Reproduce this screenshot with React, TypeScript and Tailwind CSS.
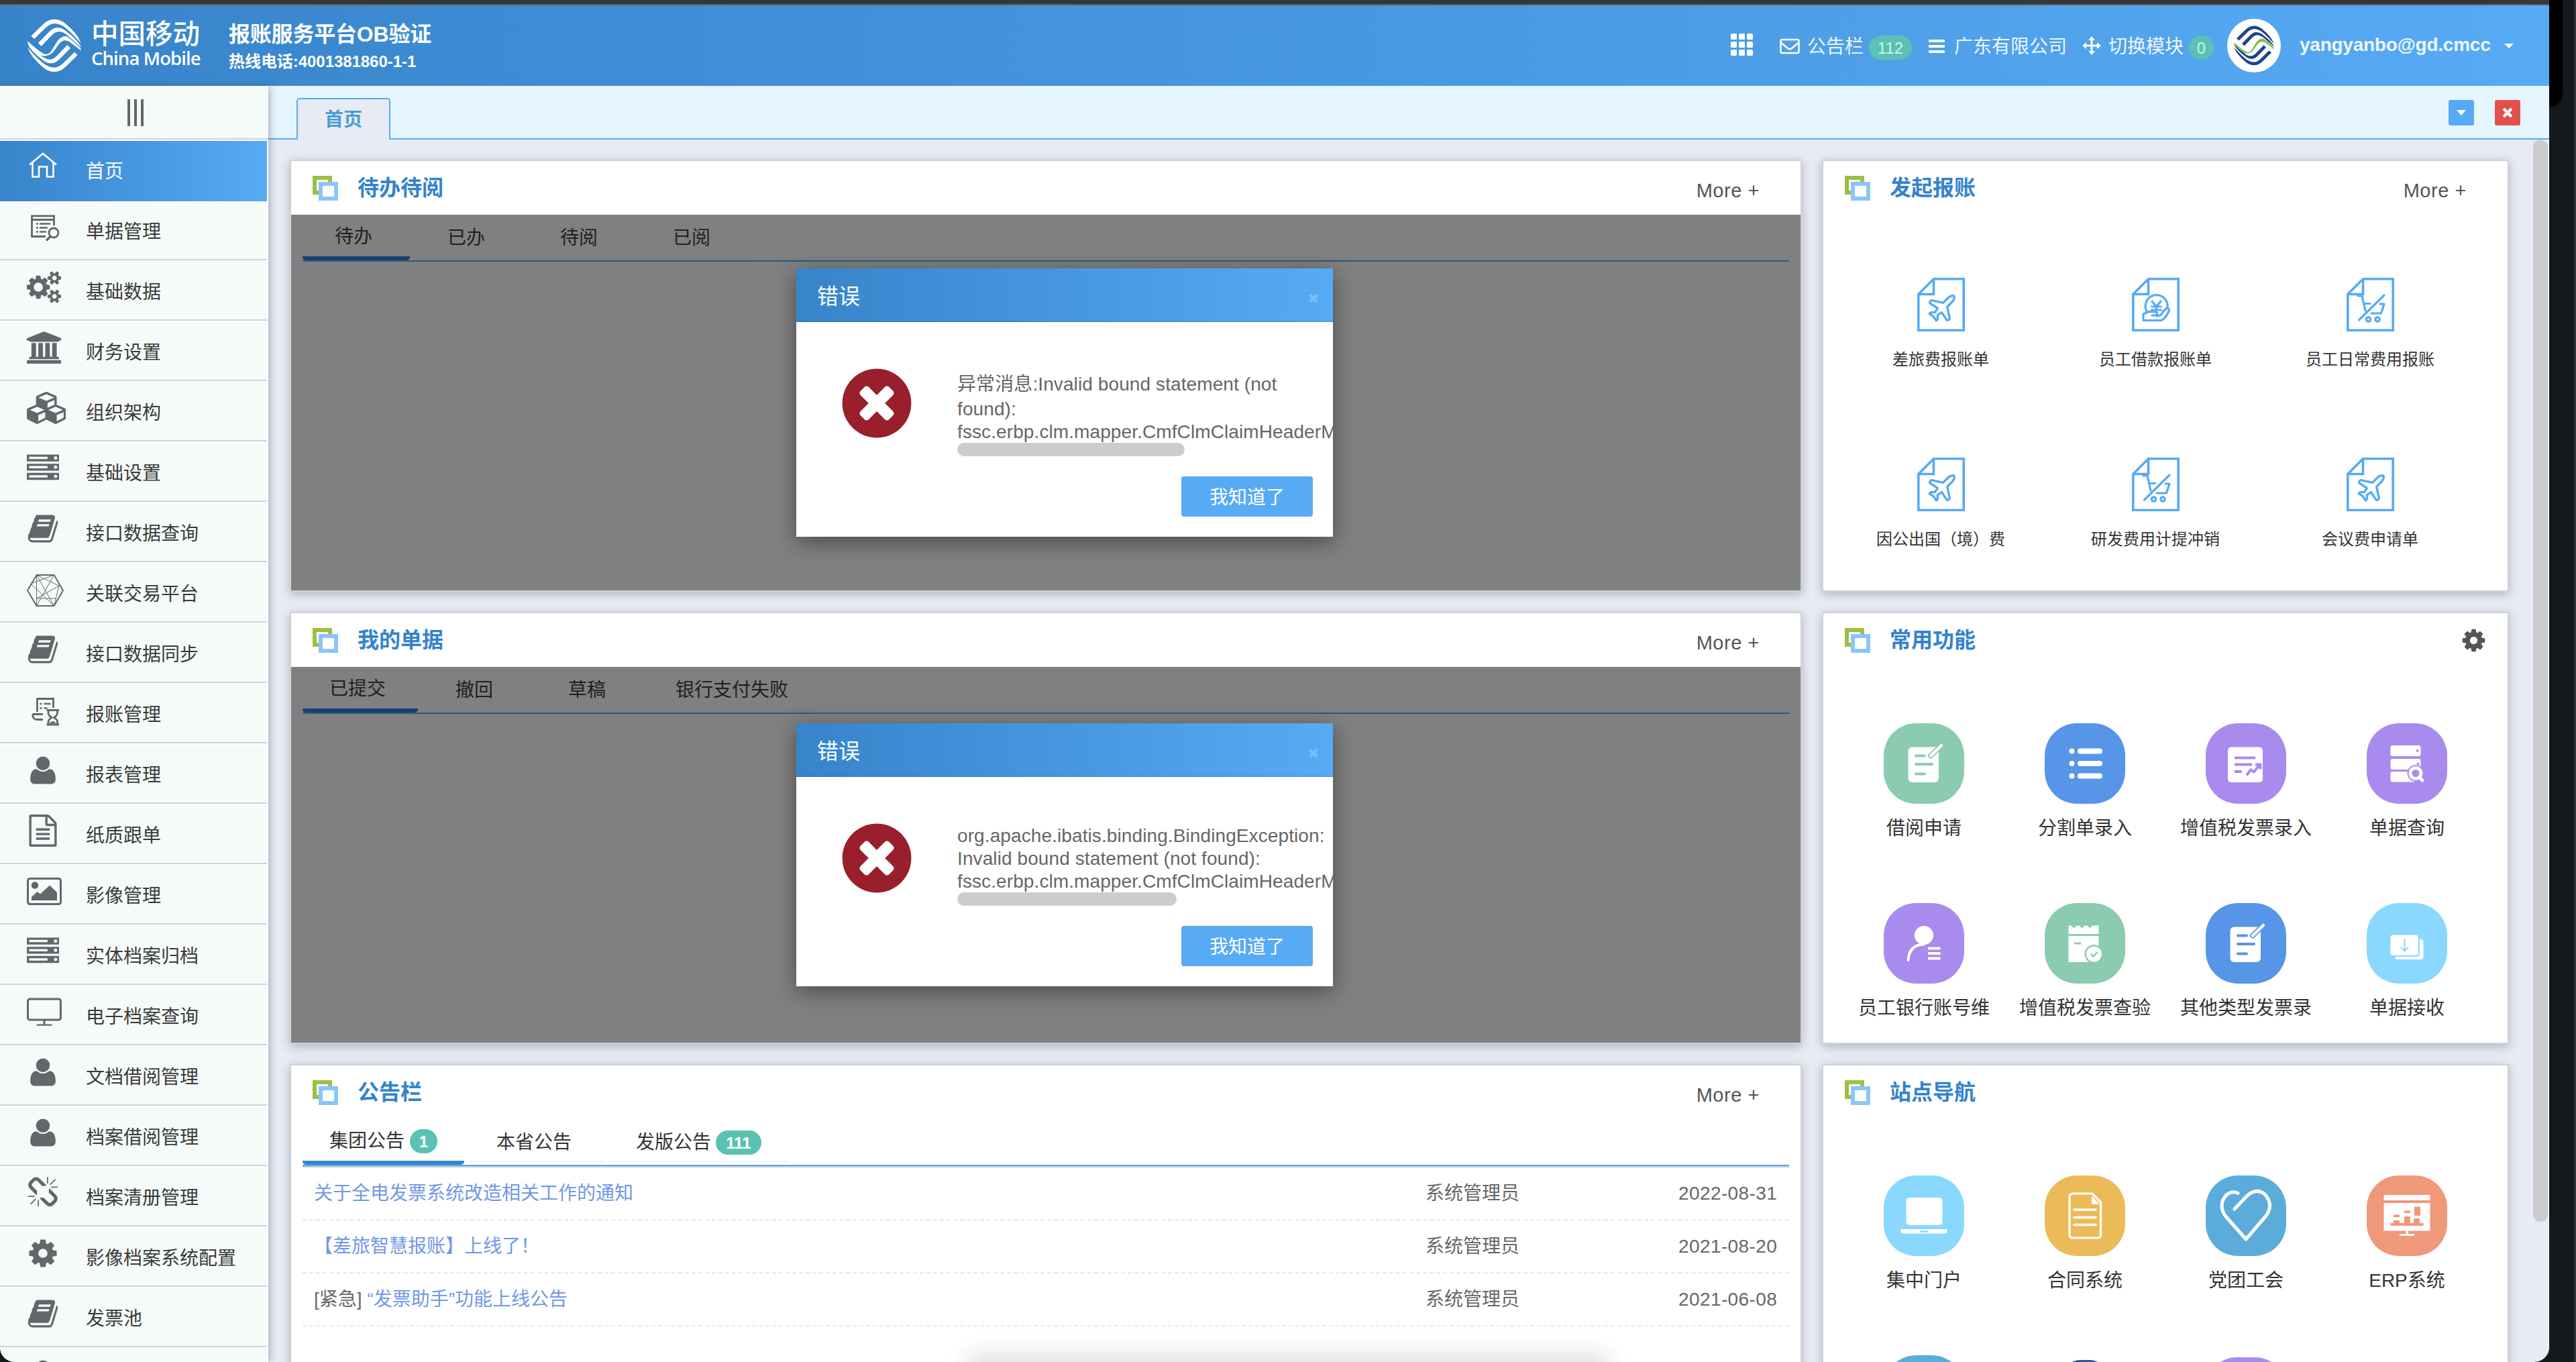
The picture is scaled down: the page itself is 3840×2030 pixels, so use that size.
import React from "react";
import { Plane } from "lucide-react";

const FA: Record<string, { d: string; w: number }> = {
  cogs: {
    w: 1920,
    d: "M896 896q0-106-75-181t-181-75-181 75-75 181 75 181 181 75 181-75 75-181zm768 512q0-52-38-90t-90-38-90 38-38 90q0 53 37.5 90.5t90.5 37.5 90.5-37.5 37.5-90.5zm0-1024q0-52-38-90t-90-38-90 38-38 90q0 53 37.5 90.5t90.5 37.5 90.5-37.5 37.5-90.5zm-384 421v185q0 10-7 19.5t-16 10.5l-155 24q-11 35-32 76 34 48 90 115 7 11 7 20 0 12-7 19-23 30-82.5 89.5t-78.5 59.5q-11 0-21-7l-115-90q-37 19-77 31-11 108-23 155-7 24-30 24h-186q-11 0-20-7.5t-10-17.5l-23-153q-34-10-75-31l-118 89q-7 7-20 7-11 0-21-8-144-133-144-160 0-9 7-19 10-14 41-53t47-61q-23-44-35-82l-152-24q-10-1-17-9.5t-7-19.5v-185q0-10 7-19.5t16-10.5l155-24q11-35 32-76-34-48-90-115-7-11-7-20 0-12 7-20 22-30 82-89t79-59q11 0 21 7l115 90q34-18 77-32 11-108 23-154 7-24 30-24h186q11 0 20 7.5t10 17.5l23 153q34 10 75 31l118-89q8-7 20-7 11 0 21 8 144 133 144 160 0 8-7 19-12 16-42 54t-45 60q23 48 34 82l152 23q10 2 17 10.5t7 19.5zm640 533v140q0 16-149 31-12 27-30 52 51 113 51 138 0 4-4 7-122 71-124 71-8 0-46-47t-52-68q-20 2-30 2t-30-2q-14 21-52 68t-46 47q-2 0-124-71-4-3-4-7 0-25 51-138-18-25-30-52-149-15-149-31v-140q0-16 149-31 13-29 30-52-51-113-51-138 0-4 4-7 4-2 35-20t59-34 30-16q8 0 46 46.5t52 67.5q20-2 30-2t30 2q51-71 92-112l6-2q4 0 124 70 4 3 4 7 0 25-51 138 17 23 30 52 149 15 149 31zm0-1024v140q0 16-149 31-12 27-30 52 51 113 51 138 0 4-4 7-122 71-124 71-8 0-46-47t-52-68q-20 2-30 2t-30-2q-14 21-52 68t-46 47q-2 0-124-71-4-3-4-7 0-25 51-138-18-25-30-52-149-15-149-31v-140q0-16 149-31 13-29 30-52-51-113-51-138 0-4 4-7 4-2 35-20t59-34 30-16q8 0 46 46.5t52 67.5q20-2 30-2t30 2q51-71 92-112l6-2q4 0 124 70 4 3 4 7 0 25-51 138 17 23 30 52 149 15 149 31z",
  },
  bank: {
    w: 1920,
    d: "M960 0l960 384v128h-128q0 26-20.5 45t-48.5 19h-1526q-28 0-48.5-19t-20.5-45h-128v-128zm-704 640h256v768h128v-768h256v768h128v-768h256v768h128v-768h256v768h59q28 0 48.5 19t20.5 45v64h-1664v-64q0-26 20.5-45t48.5-19h59v-768zm1595 960q28 0 48.5 19t20.5 45v128h-1920v-128q0-26 20.5-45t48.5-19h1782z",
  },
  cubes: {
    w: 2176,
    d: "M640 1632l384-192v-314l-384 164v342zm-64-454l404-173-404-173-404 173zm1088 454l384-192v-314l-384 164v342zm-64-454l404-173-404-173-404 173zm-448-293l384-165v-266l-384 164v267zm-64-379l441-189-441-189-441 189zm1088 518v416q0 36-19 67t-52 47l-448 224q-25 14-57 14t-57-14l-448-224q-4-2-7-4-2 2-7 4l-448 224q-25 14-57 14t-57-14l-448-224q-33-16-52-47t-19-67v-416q0-38 21.5-70t56.5-48l434-186v-400q0-38 21.5-70t56.5-48l448-192q23-10 50-10t50 10l448 192q35 16 56.5 48t21.5 70v400l434 186q36 16 57 48t21 70z",
  },
  server: {
    w: 1792,
    d: "M128 1408h1024v-128h-1024v128zm0-512h1024v-128h-1024v128zm1568 448q0-40-28-68t-68-28-68 28-28 68 28 68 68 28 68-28 28-68zm-1568-960h1024v-128h-1024v128zm1568 448q0-40-28-68t-68-28-68 28-28 68 28 68 68 28 68-28 28-68zm0-512q0-40-28-68t-68-28-68 28-28 68 28 68 68 28 68-28 28-68zm96 832v384h-1792v-384h1792zm0-512v384h-1792v-384h1792zm0-512v384h-1792v-384h1792z",
  },
  book: {
    w: 1792,
    d: "M1703 478q40 57 18 129l-275 906q-19 64-76.5 107.5t-122.5 43.5h-923q-77 0-148.5-53.5t-99.5-131.5q-24-67-2-127 0-4 3-27t4-37q1-8-3-21.5t-3-19.5q2-11 8-21t16.5-23.5 16.5-23.5q23-38 45-91.5t30-91.5q3-10 .5-30t-.5-28q3-11 17-28t17-23q21-36 42-92t25-90q1-9-2.5-32t.5-28q4-13 22-30.5t22-22.5q19-26 42.5-84.5t27.5-96.5q1-8-3-25.5t-2-26.5q2-8 9-18t18-23 17-21q8-12 16.5-30.5t15-35 16-36 19.5-32 26.5-23.5 36-11.5 47.5 5.5l-1 3q38-9 51-9h761q74 0 114 56t18 130l-274 906q-36 119-71.5 153.5t-128.5 34.5h-869q-27 0-38 15-11 16-1 43 24 70 144 70h923q29 0 56-15.5t35-41.5l300-987q7-22 5-57 38 15 59 43zm-1064 2q-4 13 2 22.5t20 9.5h608q13 0 25.5-9.5t16.5-22.5l21-64q4-13-2-22.5t-20-9.5h-608q-13 0-25.5 9.5t-16.5 22.5zm-83 256q-4 13 2 22.5t20 9.5h608q13 0 25.5-9.5t16.5-22.5l21-64q4-13-2-22.5t-20-9.5h-608q-13 0-25.5 9.5t-16.5 22.5z",
  },
  user: {
    w: 1792,
    d: "M1600 1405q0 120-73 189.5t-194 69.5h-874q-121 0-194-69.5t-73-189.5q0-53 3.5-103.5t14-109 26.5-108.5 43-97.5 62-81 85.5-53.5 111.5-20q9 0 42 21.5t74.5 48 108 48 133.5 21.5 133.5-21.5 108-48 74.5-48 42-21.5q61 0 111.5 20t85.5 53.5 62 81 43 97.5 26.5 108.5 14 109 3.5 103.5zm-320-893q0 159-112.5 271.5t-271.5 112.5-271.5-112.5-112.5-271.5 112.5-271.5 271.5-112.5 271.5 112.5 112.5 271.5z",
  },
  file: {
    w: 1792,
    d: "M1596 380q28 28 48 76t20 88v1152q0 40-28 68t-68 28h-1344q-40 0-68-28t-28-68v-1600q0-40 28-68t68-28h896q40 0 88 20t76 48zm-444-244v376h376q-10-29-22-41l-313-313q-12-12-41-22zm384 1528v-1024h-416q-40 0-68-28t-28-68v-416h-768v1536h1280zm-1024-864q0-14 9-23t23-9h704q14 0 23 9t9 23v64q0 14-9 23t-23 9h-704q-14 0-23-9t-9-23v-64zm736 224q14 0 23 9t9 23v64q0 14-9 23t-23 9h-704q-14 0-23-9t-9-23v-64q0-14 9-23t23-9h704zm0 256q14 0 23 9t9 23v64q0 14-9 23t-23 9h-704q-14 0-23-9t-9-23v-64q0-14 9-23t23-9h704z",
  },
  unlink: {
    w: 1792,
    d: "M503 1271l-256 256q-10 9-23 9-12 0-23-9-9-10-9-23t9-23l256-256q10-9 23-9t23 9q9 10 9 23t-9 23zm169 41v320q0 14-9 23t-23 9-23-9-9-23v-320q0-14 9-23t23-9 23 9 9 23zm-224-224q0 14-9 23t-23 9h-320q-14 0-23-9t-9-23 9-23 23-9h320q14 0 23 9t9 23zm1264 128q0 120-85 203l-147 146q-83 83-203 83-121 0-204-85l-334-335q-21-21-42-56l239-18 273 274q28 28 68 27.5t68-27.5l147-146q28-28 28-67 0-40-28-68l-274-275 18-239q35 21 56 42l336 336q84 86 84 204zm-617-724l-239 18-273-274q-28-28-68-28-39 0-68 27l-147 146q-28 28-28 67 0 40 28 68l274 274-18 240q-35-21-56-42l-336-336q-84-86-84-204 0-120 85-203l147-146q83-83 203-83 121 0 204 85l334 335q21 21 42 56zm633 84q0 14-9 23t-23 9h-320q-14 0-23-9t-9-23 9-23 23-9h320q14 0 23 9t9 23zm-544-544v320q0 14-9 23t-23 9-23-9-9-23v-320q0-14 9-23t23-9 23 9 9 23zm407 151l-256 256q-11 9-23 9t-23-9q-9-10-9-23t9-23l256-256q10-9 23-9t23 9q9 10 9 23t-9 23z",
  },
  cog: {
    w: 1792,
    d: "M1152 896q0-106-75-181t-181-75-181 75-75 181 75 181 181 75 181-75 75-181zm512-109v222q0 12-8 23t-20 13l-185 28q-19 54-39 91 35 50 107 138 10 12 10 25t-9 23q-27 37-99 108t-94 71q-12 0-26-9l-138-108q-44 23-91 38-16 136-29 186-7 28-36 28h-222q-14 0-24.5-8.5t-11.5-21.5l-28-184q-49-16-90-37l-141 107q-10 9-25 9-14 0-25-11-126-114-165-168-7-10-7-23 0-12 8-23 15-21 51-66.5t54-70.5q-27-50-41-99l-183-27q-13-2-21-12.5t-8-23.5v-222q0-12 8-23t19-13l186-28q14-46 39-92-40-57-107-138-10-12-10-24 0-10 9-23 26-36 98.5-107.5t94.5-71.5q13 0 26 10l138 107q44-23 91-38 16-136 29-186 7-28 36-28h222q14 0 24.5 8.5t11.5 21.5l28 184q49 16 90 37l142-107q9-9 24-9 13 0 25 10 129 119 165 170 7 8 7 22 0 12-8 23-15 21-51 66.5t-54 70.5q26 50 41 98l183 28q13 2 21 12.5t8 23.5z",
  },
  error: {
    w: 1792,
    d: "M1277 1122q0-26-19-45l-181-181 181-181q19-19 19-45 0-27-19-46l-90-90q-19-19-46-19-26 0-45 19l-181 181-181-181q-19-19-45-19-27 0-46 19l-90 90q-19 19-19 46 0 26 19 45l181 181-181 181q-19 19-19 45 0 27 19 46l90 90q19 19 46 19 26 0 45-19l181-181 181 181q19 19 45 19 27 0 46-19l90-90q19-19 19-46zm387-226q0 209-103 385.5t-279.5 279.5-385.5 103-385.5-103-279.5-279.5-103-385.5 103-385.5 279.5-279.5 385.5-103 385.5 103 279.5 279.5 103 385.5z",
  },
};

function Fa({ name, size }: { name: string; size: number }) {
  const g = FA[name];
  return (
    <svg width={(size * g.w) / 1792} height={size} viewBox={`0 0 ${g.w} 1792`} fill="currentColor" className="block shrink-0">
      <path d={g.d} />
    </svg>
  );
}

function HomeIcon() {
  return (
    <svg width="48" height="48" fill="none" stroke="currentColor" strokeWidth="2.6" className="block">
      <path d="M4 21.5 24 5l20 16.5M8.5 18.5V39.500h9.500V24.500h12V39.500h9.500V18.500" />
    </svg>
  );
}
function BillIcon() {
  return (
    <svg width="52" height="48" fill="none" stroke="currentColor" className="block">
      <path d="M40.500 22V7.800H7.500V38.500H28M7.500 13.500H40.500" strokeWidth="2.800" />
      <path d="M14 19.500h3M19 19.500h16M14 25.500h3M19 25.500h12M14 31.500h3M19 31.500h10" strokeWidth="2.400" />
      <circle cx="40" cy="33" r="7" strokeWidth="2.800" />
      <path d="M35 38.500 29 44.500" strokeWidth="3.600" />
    </svg>
  );
}
function HexIcon() {
  return (
    <svg width="55" height="52" viewBox="0 -2 55 52" fill="none" stroke="currentColor" className="block">
      <path d="M1 24 14.500 1h26L54 24 40.500 47h-26z" strokeWidth="2" />
      <path d="M14.500 1 40.500 47M40.500 1 14.500 47M14.500 1V47M40.500 1 6 14M14.500 1 48 17 M6 14 40.500 47M48 17 40.500 47M14.500 36H44M48 17 14.500 36" strokeWidth="1" />
    </svg>
  );
}
function HourglassDocIcon() {
  return (
    <svg width="52" height="48" fill="none" stroke="currentColor" className="block">
      <path d="M15.500 27V7.500H39.500V21M8.500 30.500H24M8.500 30.500Q9 38.500 15 38.500H24" strokeWidth="2.800" />
      <path d="M19.500 15h3M25.500 15h10M19.500 21.500h3M25.500 21.500h5" strokeWidth="2.400" />
      <path d="M29.500 24.500H48M29.500 46H48M32 25v4q0 3 5 6.500-5 3-5 6.500v4M45.500 25v4q0 3-5 6.500 5 3 5 6.500v4" strokeWidth="2.800" />
      <path d="M34 44q5-5 9 0z" fill="currentColor" />
    </svg>
  );
}
function ImageIcon() {
  return (
    <svg width="52" height="48" className="block">
      <rect x="1.500" y="5.500" width="49" height="38" rx="3" fill="none" stroke="currentColor" strokeWidth="3" />
      <circle cx="12" cy="15.500" r="5.200" fill="currentColor" />
      <path d="M7 38v-5l8.500-8 4.500 3.500L34 15.500 45 26v12z" fill="currentColor" />
    </svg>
  );
}
function DesktopIcon() {
  return (
    <svg width="52" height="48" className="block">
      <rect x="1.500" y="5" width="49" height="31" rx="3" fill="none" stroke="currentColor" strokeWidth="3" />
      <path d="M14 44.800q0-2.300 2.500-2.300h8V36h3v6.500h8q2.500 0 2.500 2.300z" fill="currentColor" />
    </svg>
  );
}

type NavItem = { label: string; icon: React.ReactNode };
const fa48 = (n: string) => <Fa name={n} size={48} />;
const NAV: NavItem[] = [
  { label: "首页", icon: <HomeIcon /> },
  { label: "单据管理", icon: <BillIcon /> },
  { label: "基础数据", icon: fa48("cogs") },
  { label: "财务设置", icon: fa48("bank") },
  { label: "组织架构", icon: fa48("cubes") },
  { label: "基础设置", icon: fa48("server") },
  { label: "接口数据查询", icon: fa48("book") },
  { label: "关联交易平台", icon: <HexIcon /> },
  { label: "接口数据同步", icon: fa48("book") },
  { label: "报账管理", icon: <HourglassDocIcon /> },
  { label: "报表管理", icon: fa48("user") },
  { label: "纸质跟单", icon: fa48("file") },
  { label: "影像管理", icon: <ImageIcon /> },
  { label: "实体档案归档", icon: fa48("server") },
  { label: "电子档案查询", icon: <DesktopIcon /> },
  { label: "文档借阅管理", icon: fa48("user") },
  { label: "档案借阅管理", icon: fa48("user") },
  { label: "档案清册管理", icon: fa48("unlink") },
  { label: "影像档案系统配置", icon: fa48("cog") },
  { label: "发票池", icon: fa48("book") },
  { label: "", icon: fa48("user") },
];

function Waves({ size, outer, inner }: { size: number; outer: string; inner: string }) {
  const top = (
    <>
      <path d="M52 113 104 62Q128 38 155 38 182 38 205 57 262 104 275 146 240 104 207 77 182 57 157 57 138 57 118 75L66 126Z" />
      <path d="M84 144 130 97Q150 76 168 76 186 75 202 86 262 130 276 164 240 132 206 103 190 93 176 93 163 93 150 104L98 158Z" />
    </>
  );
  return (
    <svg width={size} height={size} viewBox="36 36 240 240" className="block shrink-0">
      <g fill={outer}>
        {top}
        <g transform="rotate(180 156 155.500)">{top}</g>
      </g>
      <path
        fill={inner}
        d="M37 136Q72 170 104 190 124 202 140 184L168 138Q188 112 208 114 222 118 274 168L274 178Q240 150 222 138 196 124 176 150L150 186Q126 208 98 200 64 180 38 146Z"
      />
    </svg>
  );
}

function Header() {
  return (
    <header className="flex h-[120px] shrink-0 items-start bg-linear-to-r from-[#3784ca] to-[#57aaf4] text-white">
      <div className="pl-[41px] pt-[20px]">
        <Waves size={80} outer="#fff" inner="#fff" />
      </div>
      <div className="flex w-[220px] flex-col pl-[15px] pt-[20px]">
        <div className="h-[45px] text-[40.500px] leading-[46px] font-medium whitespace-nowrap">中国移动</div>
        <div className="font-['Open_Sans'] text-[27.500px] leading-[28px] font-semibold tracking-[-0.9px] whitespace-nowrap">China Mobile</div>
      </div>
      <div className="flex flex-col pt-[23px] font-bold">
        <div className="h-[40px] text-[32px] leading-[40px] tracking-[-0.2px]">报账服务平台OB验证</div>
        <div className="mt-[6px] text-[24px] leading-[30px] tracking-[-0.05px]">热线电话:4001381860-1-1</div>
      </div>
      <div className="ml-auto flex h-[120px] items-center text-[28px] text-white/90">
        <div className="mr-[40px] grid grid-cols-3 gap-x-[3px] gap-y-[3px] pb-[4px]">
          {Array.from({ length: 9 }, (_, i) => (
            <span key={i} className="h-[9px] w-[9px] rounded-[1.500px] bg-white" />
          ))}
        </div>
        <svg width="30" height="24" fill="none" stroke="#fff" strokeWidth="2.500" className="mt-[2px] mr-[11px]">
          <rect x="1.500" y="2" width="27" height="20" rx="2" />
          <path d="M2 6.500 12 15q3 2.500 6 0l10-8.500" />
        </svg>
        <span className="w-[92px] pt-[3px] whitespace-nowrap">公告栏</span>
        <span className="mt-[6px] mr-[25px] flex h-[36px] w-[64px] items-center justify-center rounded-[18px] bg-[#5bc2b3] pt-[2px] text-[24px] text-white/75">112</span>
        <span className="mt-[1px] mr-[14px] flex w-[24px] flex-col gap-[4px]">
          <i className="h-[4px] rounded-[1px] bg-white" />
          <i className="h-[4px] rounded-[1px] bg-white" />
          <i className="h-[4px] rounded-[1px] bg-white" />
        </span>
        <span className="w-[191px] pt-[3px] whitespace-nowrap">广东有限公司</span>
        <svg width="28" height="28" fill="#fff" stroke="#fff" className="mr-[11px]">
          <path d="M14 3v22M3 14h22" strokeWidth="3" />
          <path d="m14 0 5 6H9zM14 28l5-6H9zM0 14l6-5v10zM28 14l-6-5v10z" stroke="none" />
        </svg>
        <span className="w-[120px] pt-[3px] whitespace-nowrap">切换模块</span>
        <span className="mt-[6px] mr-[20px] flex h-[36px] w-[37px] items-center justify-center rounded-[18px] bg-[#5bc2b3] pt-[2px] text-[24px] text-white/75">0</span>
        <div className="flex h-[80px] w-[80px] items-center justify-center rounded-full bg-white">
          <Waves size={60} outer="#1c4489" inner="#7fc04b" />
        </div>
        <span className="mt-[-3px] ml-[28px] w-[305px] text-[28px] font-bold tracking-[-0.25px]">yangyanbo@gd.cmcc</span>
        <i className="mr-[53px] h-0 w-0 border-x-[7px] border-t-[7px] border-x-transparent border-t-white" />
      </div>
    </header>
  );
}

function Sidebar() {
  return (
    <aside className="relative z-10 flex h-full w-[400px] shrink-0 flex-col overflow-hidden bg-[#f5fbf9] shadow-[2px_0_10px_rgba(80,85,100,0.45)]">
      <div className="flex h-[82px] shrink-0 items-center justify-center gap-[6px] border-b-2 border-white pl-[4px] shadow-[inset_0_-2px_#ccd3d7]">
        <i className="h-[40px] w-[4px] bg-[#666]" />
        <i className="h-[40px] w-[4px] bg-[#666]" />
        <i className="h-[40px] w-[4px] bg-[#666]" />
      </div>
      {NAV.map((n, i) => (
        <div
          key={i}
          className={
            i === 0
              ? "flex h-[90px] shrink-0 border-r-2 border-white bg-linear-to-r from-[#3784ca] to-[#57aaf4] text-white"
              : "flex h-[90px] shrink-0 border-r-2 border-b-2 border-white text-[#60686c] shadow-[inset_0_-2px_#ccd3d7]"
          }
        >
          <div className="ml-[40px] w-[88px] pt-[14px]">{n.icon}</div>
          <span className={i === 0 ? "pt-[2px] text-[28px] leading-[88px]" : "pt-[2px] text-[28px] leading-[88px] text-[#3a3a3a]"}>{n.label}</span>
        </div>
      ))}
    </aside>
  );
}

function CardHeader({ title, right }: { title: string; right?: React.ReactNode }) {
  return (
    <div className="flex h-[80px] shrink-0 items-center pl-[32px]">
      <div className="relative h-[37px] w-[38px]">
        <i className="absolute top-0 left-0 h-[28px] w-[29px] border-[6px] border-[#9bc043]" />
        <i className="absolute right-0 bottom-0 h-[28px] w-[29px] border-[6px] border-[#8cc5f7] bg-white" />
      </div>
      <h2 className="ml-[29px] text-[32px] leading-[40px] font-bold text-[#3483cb]">{title}</h2>
      <div className="ml-auto">{right}</div>
    </div>
  );
}

const More = () => <span className="mr-[61px] block pt-[7px] text-[29px] leading-[34px] tracking-[0.55px] text-[#555]">More +</span>;

const cardCls = "relative flex h-[644px] shrink-0 flex-col border-2 border-[#ccd3d7] bg-white shadow-[0_4px_14px_rgba(60,65,80,0.32)]";

function ErrorDialog({ lines, tall }: { lines: string[]; tall?: boolean }) {
  return (
    <div
      className={
        tall
          ? "absolute top-[160px] left-[753px] flex h-[400px] w-[800px] flex-col bg-white shadow-[0_8px_30px_rgba(0,0,0,0.42)]"
          : "absolute top-[164px] left-[753px] flex h-[392px] w-[800px] flex-col bg-white shadow-[0_8px_30px_rgba(0,0,0,0.42)]"
      }
    >
      <div className="flex h-[80px] shrink-0 items-center justify-between bg-linear-to-r from-[#3784ca] to-[#57aaf4] pr-[22px] pl-[31px] text-[32px] text-white shadow-[inset_0_-2px_rgba(20,60,110,0.13)]">
        <span className="pt-[3px]">错误</span>
        <svg width="14" height="15" stroke="#7fbef7" strokeWidth="4.500" strokeLinecap="round" className="mt-[9px]">
          <path d="m3 3.500 8 8M11 3.500l-8 8" />
        </svg>
      </div>
      <div className={tall ? "flex h-[213px] items-start overflow-hidden pt-[61px] pl-[60px]" : "flex h-[205px] items-start overflow-hidden pt-[61px] pl-[60px]"}>
        <div className="text-[#9a1f2c]">
          <Fa name="error" size={120} />
        </div>
        <div className={tall ? "ml-[60px] pt-[13px] text-[28px] text-[#666]" : "ml-[60px] pt-[9px] text-[28px] text-[#666]"}>
          {lines.map((l, i) => (
            <div key={l} className={tall && i === 0 ? "h-[38px] pt-[1px] leading-[36px] tracking-[0.1px] whitespace-nowrap" : "h-[34px] pt-[1px] leading-[34px] tracking-[0.1px] whitespace-nowrap"}>
              {l}
            </div>
          ))}
          <div className={tall ? "h-[20px] w-[339px] rounded-[10px] bg-[#ccc]" : "h-[20px] w-[327px] rounded-[10px] bg-[#ccc]"} />
        </div>
      </div>
      <div className="mt-[17px] mr-[30px] flex h-[60px] w-[196px] items-center justify-center self-end rounded-[4px] bg-[#57aaf4] pt-[3px] text-[28px] text-white">
        我知道了
      </div>
    </div>
  );
}

type Tab = { label: string; cls: string; bar: string; badge?: string; badgeCls?: string };

const T48 = { cls: "w-[160px] pl-[48px]", bar: "ml-[-48px]" };
const T41 = { cls: "w-[172px] pl-[40px]", bar: "ml-[-40px]" };
const T40 = { cls: "w-[256px] pl-[40px]", bar: "ml-[-40px]" };
const N1 = { cls: "w-[241px] pl-[40px]", bar: "ml-[-40px]" };
const N2 = { cls: "w-[200px] pl-[40px]", bar: "ml-[-40px]" };
const N3 = { cls: "w-[267px] pl-[40px]", bar: "ml-[-40px]" };

function barClass(active: boolean, dim?: boolean) {
  if (active) return dim ? "h-[6px] rounded-b-[5px] bg-[#19426a]" : "h-[6px] rounded-b-[5px] bg-[#3784ca]";
  return dim ? "mb-[2px] h-[2px] rounded-b-[5px] bg-[#7a7a7b]" : "mb-[4px] h-[2px] rounded-b-[5px] bg-[#f3f3f6]";
}

function Tabs({ tabs, dim }: { tabs: Tab[]; dim?: boolean }) {
  return (
    <div
      className={
        dim
          ? "mx-[17px] flex h-[70px] shrink-0 gap-[8px] border-b-2 border-[#2b5883] text-[28px] text-[#1f1f1f]"
          : "mx-[17px] flex h-[72px] shrink-0 gap-[8px] border-b-2 border-[#c5c9cc] text-[28px] text-[#333] shadow-[inset_0_-2px_#57aaf4]"
      }
    >
      {tabs.map((t, i) => (
        <div key={t.label} className={`flex h-[68px] flex-col justify-between ${t.cls}`}>
          <div className={i === 0 ? "flex items-center pt-[13px] leading-[40px]" : "flex items-center pt-[15px] leading-[40px]"}>
            {t.label}
            {t.badge && (
              <span className={`flex h-[36px] items-center justify-center rounded-[18px] bg-[#5bc2b3] pt-[1px] text-[24px] font-bold text-white ${t.badgeCls}`}>{t.badge}</span>
            )}
          </div>
          <div className={`${barClass(i === 0, dim)} ${t.bar}`} />
        </div>
      ))}
    </div>
  );
}

const ROWS = [
  { pre: "", title: "关于全电发票系统改造相关工作的通知", date: "2022-08-31" },
  { pre: "", title: "【差旅智慧报账】上线了！", date: "2021-08-20" },
  { pre: "[紧急] ", title: "“发票助手”功能上线公告", date: "2021-06-08" },
];

function FileFrame({ children }: { children: React.ReactNode }) {
  return (
    <svg width="71" height="80" fill="none" stroke="#57aaf4" strokeWidth="3.200" strokeLinejoin="round" strokeLinecap="round" className="block">
      <path d="M24.500 1.800H69.200V78.200H1.800V24.500ZM24.500 1.800V24.500H1.800" strokeLinejoin="miter" strokeWidth="3.600" />
      {children}
    </svg>
  );
}
const PlaneFile = () => (
  <FileFrame>
    <Plane x={12} y={21} width={49} height={49} color="#57aaf4" strokeWidth={1.650} />
  </FileFrame>
);
const LoanFile = () => (
  <FileFrame>
    <path d="M23 51.500A16.500 16.500 0 1 1 53 44M30 35l6.500 8 6.500-8M29.500 43H43.500M29.500 48H43.500M36.500 43v9" />
    <path d="M17 63V54L26 50.500 36 51q3 1.500 0 5H30M37 57q7 0 9-6l5-5q4-2 4.500 2-3 10-11 15.500H17" />
  </FileFrame>
);
const CartFile = () => (
  <FileFrame>
    <path d="M17 27h6l5 22M28 38.500h7M50 39h6l-4.500 14H37M56 26 18.500 63" />
    <circle cx="32.500" cy="62" r="3.200" />
    <circle cx="46" cy="62" r="3.200" />
  </FileFrame>
);

function Note({ bg }: { bg: string }) {
  return (
    <svg width="120" height="120">
      <rect x="36.500" y="35.500" width="45.500" height="52.500" rx="6" fill="#fff" />
      <path d="M48 48.500h13M48 61h24M48 75.500h13" stroke={bg} strokeWidth="4" strokeLinecap="round" />
      <path d="M86 33 70 48.500" stroke={bg} strokeWidth="8" strokeLinecap="round" />
      <path d="M86 33 70 48.500" stroke="#fff" strokeWidth="4.500" strokeLinecap="round" />
    </svg>
  );
}
const ListI = () => (
  <svg width="120" height="120" stroke="#fff" strokeWidth="8" strokeLinecap="round">
    <path d="M40.500 41.500h0M53 41.500H82M40.500 60h0M53 60H82M40.500 78.500h0M53 78.500H82" />
  </svg>
);
const TaxI = () => (
  <svg width="120" height="120" fill="none" stroke="#a98bed" strokeWidth="4">
    <rect x="33" y="35.500" width="52" height="52.500" rx="5" fill="#fff" stroke="none" />
    <path d="M43 51.500H74M43 61.500H69M43 72H54M61 77.500l6-8 5 3L80.500 62M74 61.500h7.500v7" />
  </svg>
);
const QueryI = () => (
  <svg width="120" height="120" fill="#fff">
    <rect x="35.500" y="33" width="45" height="16" rx="3" />
    <rect x="35.500" y="53" width="45" height="16" rx="3" />
    <rect x="35.500" y="72" width="38" height="15.500" rx="3" />
    <circle cx="75.500" cy="41" r="2" fill="#a98bed" />
    <circle cx="76.500" cy="60.500" r="2" fill="#a98bed" />
    <circle cx="73" cy="74.500" r="12.500" fill="#a98bed" />
    <circle cx="73" cy="74.500" r="8" fill="none" stroke="#fff" strokeWidth="5" />
    <path d="m79 81 4 4" stroke="#fff" strokeWidth="5" strokeLinecap="round" />
  </svg>
);
const PersonI = () => (
  <svg width="120" height="120" fill="none" stroke="#fff" strokeLinecap="round">
    <circle cx="60" cy="48" r="14" fill="#fff" stroke="none" />
    <path d="M36.500 85Q38 62 60 61.500" strokeWidth="4" />
    <path d="M66 67.500H84.500M66 75H84.500M66 82.500H84.500" strokeWidth="4" strokeLinecap="butt" />
  </svg>
);
const ReceiptI = () => (
  <svg width="120" height="120" fill="#fff">
    <path d="M35.500 33.500l4 0 4 4 4-4h4l4 4 4-4h4l4 4 4-4h4l5 0V87q0 1-1 1H37q-1.500 0-1.500-1z" />
    <path d="M35.500 47.500H81M44 60H54" stroke="#8bcbb0" strokeWidth="3" fill="none" />
    <circle cx="73.500" cy="76" r="14" fill="#8bcbb0" />
    <circle cx="73.500" cy="76" r="11.500" />
    <path d="m69 76 3.500 3.500 6-6.500" fill="none" stroke="#8bcbb0" strokeWidth="2.500" />
  </svg>
);
const ReceiveI = () => (
  <svg width="120" height="120" fill="#fff">
    <rect x="42" y="54" width="42.500" height="30" rx="4" />
    <rect x="34" y="46" width="45" height="34" rx="5" fill="#8ad8fd" />
    <rect x="35.500" y="47.500" width="41.500" height="30.500" rx="4" />
    <path d="M56.500 54V71M51 66l5.500 5.500L62 66" fill="none" stroke="#8ad8fd" strokeWidth="2" />
  </svg>
);
const LaptopI = () => (
  <svg width="120" height="120" fill="#fff">
    <rect x="33.500" y="33" width="54" height="41" rx="5" />
    <path d="M25.500 80H94.500V83q0 3.500-4 3.500H29.500q-4 0-4-3.500z" />
    <path d="M54 83.500H66" stroke="#8ad8fd" strokeWidth="2.500" />
  </svg>
);
const ContractI = () => (
  <svg width="120" height="120" fill="none" stroke="#fff" strokeWidth="3.200">
    <path d="M42 27H71L83.500 40V88q0 5-5 5H42q-5 0-5-5V32q0-5 5-5z" />
    <path d="M70 30V43H82z" fill="#fff" stroke="none" />
    <path d="M44 51H76M44 62.500H76M44 73.500H76" strokeWidth="3.500" strokeLinecap="round" />
  </svg>
);
const HeartI = () => (
  <svg width="120" height="120" fill="none" stroke="#fff" strokeWidth="5" strokeLinecap="round" strokeLinejoin="round">
    <path d="M43 50 62 30Q76 18 88 28 102 43 90 60L60 95 29 60Q18 43 31 29 39 22 48 26.500" />
  </svg>
);
const ErpI = () => (
  <svg width="120" height="120" fill="#fff">
    <path d="M25.500 29H94.500V37H25.500zM25.500 41H94.500V82.500H25.500zM58.500 82h3.500v5H71V90H49V87h9.500z" />
    <path
      fill="#f0987a"
      d="M35.500 71H40V67h9v4h7V61h9v10h5V64h9v7h5.500v4H35.500zM40 58.500h9V62H40zM56 52.500h9V56H56zM71 46.500h9V60H71z"
    />
  </svg>
);

function Tile({ cls, icon, label }: { cls: string; icon: React.ReactNode; label: string }) {
  return (
    <div className="flex h-[268px] w-[240px] flex-col items-center">
      <div className={`h-[120px] w-[120px] shrink-0 rounded-[48px] ${cls}`}>{icon}</div>
      <span className="mt-[17px] text-[28px] leading-[40px] whitespace-nowrap text-[#333]">{label}</span>
    </div>
  );
}

const FILES: [React.ReactNode, string][] = [
  [<PlaneFile />, "差旅费报账单"],
  [<LoanFile />, "员工借款报账单"],
  [<CartFile />, "员工日常费用报账"],
  [<PlaneFile />, "因公出国（境）费"],
  [<CartFile />, "研发费用计提冲销"],
  [<PlaneFile />, "会议费申请单"],
];

export default function App() {
  return (
    <div className="relative flex h-[2030px] w-[3840px] overflow-hidden border-r-[3px] border-[#30343a] bg-[#15191e] font-['Liberation_Sans','Noto_Sans_CJK_SC',sans-serif]">
      <div className="flex w-[3800px] shrink-0 flex-col overflow-hidden rounded-b-[22px] bg-[#e8ebf3]">
        <div className="h-[8px] shrink-0 border-b-2 border-[#5f6063] bg-[#35363a]" />
        <Header />
        <div className="flex min-h-0 flex-1">
          <Sidebar />
          <main className="flex min-w-0 flex-1 flex-col">
            <div className="flex h-[80px] shrink-0 items-end bg-[#e6f6fe] shadow-[inset_0_-2px_#57aaf4]">
              <div className="ml-[42px] flex h-[62px] w-[140px] items-center justify-center rounded-t-[5px] border-2 border-b-0 border-[#57aaf4] bg-[#e8ebf3] pt-[2px] text-[28px] font-bold text-[#489cd6]">
                首页
              </div>
              <div className="mr-[43px] mb-[21px] ml-auto flex gap-[31px]">
                <div className="flex h-[38px] w-[38px] items-center justify-center rounded-[3px] bg-[#57aaf4]">
                  <i className="h-0 w-0 border-x-[7px] border-t-[8px] border-x-transparent border-t-white" />
                </div>
                <div className="flex h-[38px] w-[38px] items-center justify-center rounded-[3px] bg-[#e0524b]">
                  <svg width="16" height="16" stroke="#fff" strokeWidth="4.500" strokeLinecap="round">
                    <path d="m3.500 3.500 9 9M12.500 3.500l-9 9" />
                  </svg>
                </div>
              </div>
            </div>
            <div className="flex min-h-0 flex-1 items-start overflow-hidden">
              <div className="mt-[30px] ml-[32px] flex w-[2254px] shrink-0 flex-col gap-[30px]">
                <section className={cardCls}>
                  <CardHeader title="待办待阅" right={<More />} />
                  <div className="flex-1 bg-[#808080]">
                    <Tabs
                      dim
                      tabs={[
                        { label: "待办", ...T48 },
                        { label: "已办", ...T48 },
                        { label: "待阅", ...T48 },
                        { label: "已阅", ...T48 },
                      ]}
                    />
                  </div>
                  <ErrorDialog tall lines={["异常消息:Invalid bound statement (not", "found):", "fssc.erbp.clm.mapper.CmfClmClaimHeaderM"]} />
                </section>
                <section className={cardCls}>
                  <CardHeader title="我的单据" right={<More />} />
                  <div className="flex-1 bg-[#808080]">
                    <Tabs
                      dim
                      tabs={[
                        { label: "已提交", ...T41 },
                        { label: "撤回", ...T48 },
                        { label: "草稿", ...T48 },
                        { label: "银行支付失败", ...T40 },
                      ]}
                    />
                  </div>
                  <ErrorDialog lines={["org.apache.ibatis.binding.BindingException:", "Invalid bound statement (not found):", "fssc.erbp.clm.mapper.CmfClmClaimHeaderM"]} />
                </section>
                <section className={cardCls}>
                  <CardHeader title="公告栏" right={<More />} />
                  <Tabs
                    tabs={[
                      { label: "集团公告", ...N1, badge: "1", badgeCls: "ml-[8px] w-[41px]" },
                      { label: "本省公告", ...N2 },
                      { label: "发版公告", ...N3, badge: "111", badgeCls: "ml-[7px] w-[68px]" },
                    ]}
                  />
                  <div className="mx-[17px] text-[28px] text-[#666]">
                    {ROWS.map((r) => (
                      <div key={r.date} className="flex h-[79px] items-center border-b-2 border-dashed border-[#e6e9ef] pt-[1px] pl-[17px]">
                        <span className="w-[1657px]">
                          {r.pre}
                          <span className="text-[#7098e5]">{r.title}</span>
                        </span>
                        <span className="w-[377px]">系统管理员</span>
                        <span className="tracking-[0.4px]">{r.date}</span>
                      </div>
                    ))}
                  </div>
                </section>
              </div>
              <div className="mt-[30px] ml-[30px] flex w-[1024px] shrink-0 flex-col gap-[30px]">
                <section className={cardCls}>
                  <CardHeader title="发起报账" right={<More />} />
                  <div className="grid grid-cols-[320px_320px_320px] pt-[94px] pl-[15px]">
                    {FILES.map(([icon, label]) => (
                      <div key={label} className="flex h-[268px] flex-col items-center">
                        {icon}
                        <span className="mt-[24px] text-[24px] leading-[36px] whitespace-nowrap text-[#333]">{label}</span>
                      </div>
                    ))}
                  </div>
                </section>
                <section className={cardCls}>
                  <CardHeader
                    title="常用功能"
                    right={
                      <div className="mr-[31px] text-[#555]">
                        <Fa name="cog" size={39} />
                      </div>
                    }
                  />
                  <div className="grid grid-cols-[240px_240px_240px_240px] pt-[84px] pl-[30px]">
                    <Tile cls="bg-[#8bcbb0]" icon={<Note bg="#8bcbb0" />} label="借阅申请" />
                    <Tile cls="bg-[#5695e8]" icon={<ListI />} label="分割单录入" />
                    <Tile cls="bg-[#a98bed]" icon={<TaxI />} label="增值税发票录入" />
                    <Tile cls="bg-[#a98bed]" icon={<QueryI />} label="单据查询" />
                    <Tile cls="bg-[#a98bed]" icon={<PersonI />} label="员工银行账号维" />
                    <Tile cls="bg-[#8bcbb0]" icon={<ReceiptI />} label="增值税发票查验" />
                    <Tile cls="bg-[#5695e8]" icon={<Note bg="#5695e8" />} label="其他类型发票录" />
                    <Tile cls="bg-[#8ad8fd]" icon={<ReceiveI />} label="单据接收" />
                  </div>
                </section>
                <section className={cardCls}>
                  <CardHeader title="站点导航" />
                  <div className="grid grid-cols-[240px_240px_240px_240px] pt-[84px] pl-[30px]">
                    <Tile cls="bg-[#8ad8fd]" icon={<LaptopI />} label="集中门户" />
                    <Tile cls="bg-[#ebbb59]" icon={<ContractI />} label="合同系统" />
                    <Tile cls="bg-[#5bacdb]" icon={<HeartI />} label="党团工会" />
                    <Tile cls="bg-[#f0987a]" icon={<ErpI />} label="ERP系统" />
                    <Tile cls="bg-[#5bacdb]" icon={null} label="" />
                    <div className="mx-auto mt-[7px] h-[60px] w-[60px] rounded-[22px] bg-[#2f5597]" />
                    <div className="mx-auto mt-[3px] h-[116px] w-[116px] rounded-[44px] bg-[#a98bed]" />
                  </div>
                </section>
              </div>
              <div className="ml-auto h-full w-[24px] border-r-2 border-white/60">
                <div className="h-[1613px] rounded-[11px] bg-[#ccc]" />
              </div>
            </div>
          </main>
        </div>
      </div>
      <div className="h-[160px] w-[20px] rounded-br-[20px] bg-black" />
      <div className="absolute top-[2020px] left-[1440px] h-[30px] w-[960px] rounded-full bg-black/15 blur-[16px]" />
    </div>
  );
}
